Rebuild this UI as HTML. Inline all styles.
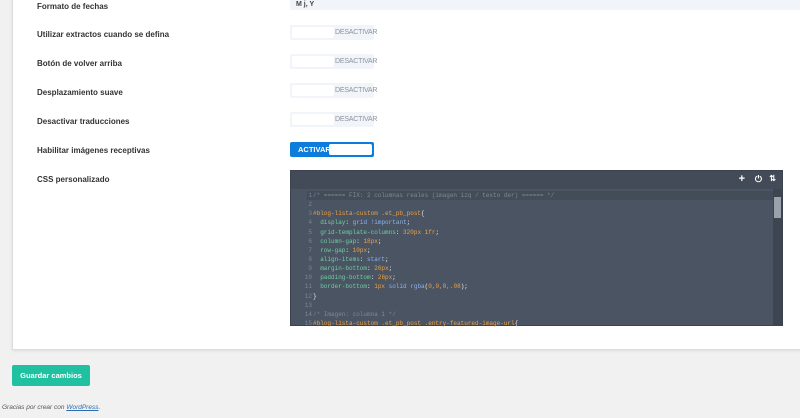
<!DOCTYPE html>
<html><head><meta charset="utf-8"><style>
*{margin:0;padding:0;box-sizing:border-box}
body{width:800px;height:418px;overflow:hidden;background:#f1f1f1;font-family:"Liberation Sans",sans-serif;position:relative}
.panel{position:absolute;left:12px;top:-2px;width:800px;height:352px;background:#fff;border:1px solid #dcdcdc;box-shadow:0 1px 3px rgba(0,0,0,.08)}
.lbl{position:absolute;left:37px;font-size:8px;font-weight:bold;color:#333;line-height:10px}
.date{position:absolute;left:290px;top:0;width:510px;height:10px;background:#f1f4f8;font-size:7px;font-weight:bold;color:#444;padding-left:6px;line-height:9px}
.tg{position:absolute;left:290px;width:84px;height:15px;background:#f1f4f8;border-radius:2px}
.tg .w{position:absolute;left:2px;top:2px;width:42px;height:11px;background:#fff;border-radius:2px}
.tg .t{position:absolute;left:45px;top:4px;font-size:7px;line-height:8px;color:#8a93a0;letter-spacing:-.2px}
.on{position:absolute;left:290px;top:142px;width:84px;height:15px;background:#0c7ddc;border-radius:2px}
.on .t{position:absolute;left:8px;top:3px;font-size:7.5px;line-height:9px;color:#fff;font-weight:bold}
.on .w{position:absolute;left:39px;top:2px;width:43px;height:11px;background:#fff;border-radius:2px}
.ed{position:absolute;left:290px;top:170px;width:493px;height:156px;background:#4a5463;border:1px solid #3b4350}
.hd{position:absolute;left:0;top:0;width:100%;height:18px;background:#434b58}
.code{position:absolute;left:0;top:20px;font-family:"Liberation Mono",monospace;font-size:6px;line-height:9.14px;white-space:pre;color:#9fb8c6}
.ln{display:inline-block;width:22px;text-align:right;color:#7b8794;padding-right:1px}
.c{color:#7d8a97}.k{color:#6fcfa0}.o{color:#f0a040}.v{color:#8ab4f0}.s{color:#e9e9e9}
.sb{position:absolute;right:0;top:18px;width:9px;height:137px;background:#3d4551}
.btn{position:absolute;left:12px;top:365px;width:78px;height:21px;background:#1fc1a0;border-radius:2px;color:#fff;font-size:7.5px;font-weight:bold;text-align:center;line-height:21px}
.ft{position:absolute;left:2px;top:404px;font-size:6.5px;font-style:italic;color:#555}
.ft a{color:#2b6cb0;text-decoration:underline}
</style></head><body>
<div class="panel"></div>
<div class="lbl" style="top:2px">Formato de fechas</div>
<div class="date">M j, Y</div>
<div class="lbl" style="top:30px">Utilizar extractos cuando se defina</div>
<div class="tg" style="top:25px"><div class="w"></div><div class="t">DESACTIVAR</div></div>
<div class="lbl" style="top:59px">Botón de volver arriba</div>
<div class="tg" style="top:54px"><div class="w"></div><div class="t">DESACTIVAR</div></div>
<div class="lbl" style="top:88px">Desplazamiento suave</div>
<div class="tg" style="top:83px"><div class="w"></div><div class="t">DESACTIVAR</div></div>
<div class="lbl" style="top:117px">Desactivar traducciones</div>
<div class="tg" style="top:112px"><div class="w"></div><div class="t">DESACTIVAR</div></div>
<div class="lbl" style="top:146px">Habilitar imágenes receptivas</div>
<div class="on"><div class="t">ACTIVAR</div><div class="w"></div></div>
<div class="lbl" style="top:175px">CSS personalizado</div>
<div style="position:absolute;left:291px;top:228px;width:6px;height:6px;border-radius:50%;background:#d9262b"></div>
<div class="ed">
<div class="hd"><span style="position:absolute;right:37px;top:2px;color:#fff;font-size:11px;font-weight:bold">+</span><span style="position:absolute;right:20px;top:3px;color:#fff;font-size:9px;font-weight:bold">⏻</span><span style="position:absolute;right:6px;top:3px;color:#fff;font-size:8px;font-weight:bold">⇅</span></div>
<div style="position:absolute;left:16px;top:20px;width:468px;height:9px;background:#434c59"></div>
<div class="code"><span class="ln">1</span><span class="c">/* ====== FIX: 2 columnas reales (imagen izq / texto der) ====== */</span>
<span class="ln">2</span>
<span class="ln">3</span><span class="o">#blog-lista-custom .et_pb_post</span><span class="s">{</span>
<span class="ln">4</span>  <span class="k">display</span><span class="s">:</span> <span class="v">grid !important</span><span class="s">;</span>
<span class="ln">5</span>  <span class="k">grid-template-columns</span><span class="s">:</span> <span class="o">320px 1fr</span><span class="s">;</span>
<span class="ln">6</span>  <span class="k">column-gap</span><span class="s">:</span> <span class="o">18px</span><span class="s">;</span>
<span class="ln">7</span>  <span class="k">row-gap</span><span class="s">:</span> <span class="o">10px</span><span class="s">;</span>
<span class="ln">8</span>  <span class="k">align-items</span><span class="s">:</span> <span class="v">start</span><span class="s">;</span>
<span class="ln">9</span>  <span class="k">margin-bottom</span><span class="s">:</span> <span class="o">26px</span><span class="s">;</span>
<span class="ln">10</span>  <span class="k">padding-bottom</span><span class="s">:</span> <span class="o">26px</span><span class="s">;</span>
<span class="ln">11</span>  <span class="k">border-bottom</span><span class="s">:</span> <span class="o">1px</span> <span class="v">solid rgba</span><span class="s">(</span><span class="o">0,0,0,.08</span><span class="s">);</span>
<span class="ln">12</span><span class="s">}</span>
<span class="ln">13</span>
<span class="ln">14</span><span class="c">/* Imagen: columna 1 */</span>
<span class="ln">15</span><span class="o">#blog-lista-custom .et_pb_post .entry-featured-image-url</span><span class="s">{</span></div>
<div class="sb"><div style="position:absolute;left:1px;top:8px;width:7px;height:21px;background:#9aa1aa"></div></div>
</div>
<div class="btn">Guardar cambios</div>
<div class="ft">Gracias por crear con <a>WordPress</a>.</div>
</body></html>
